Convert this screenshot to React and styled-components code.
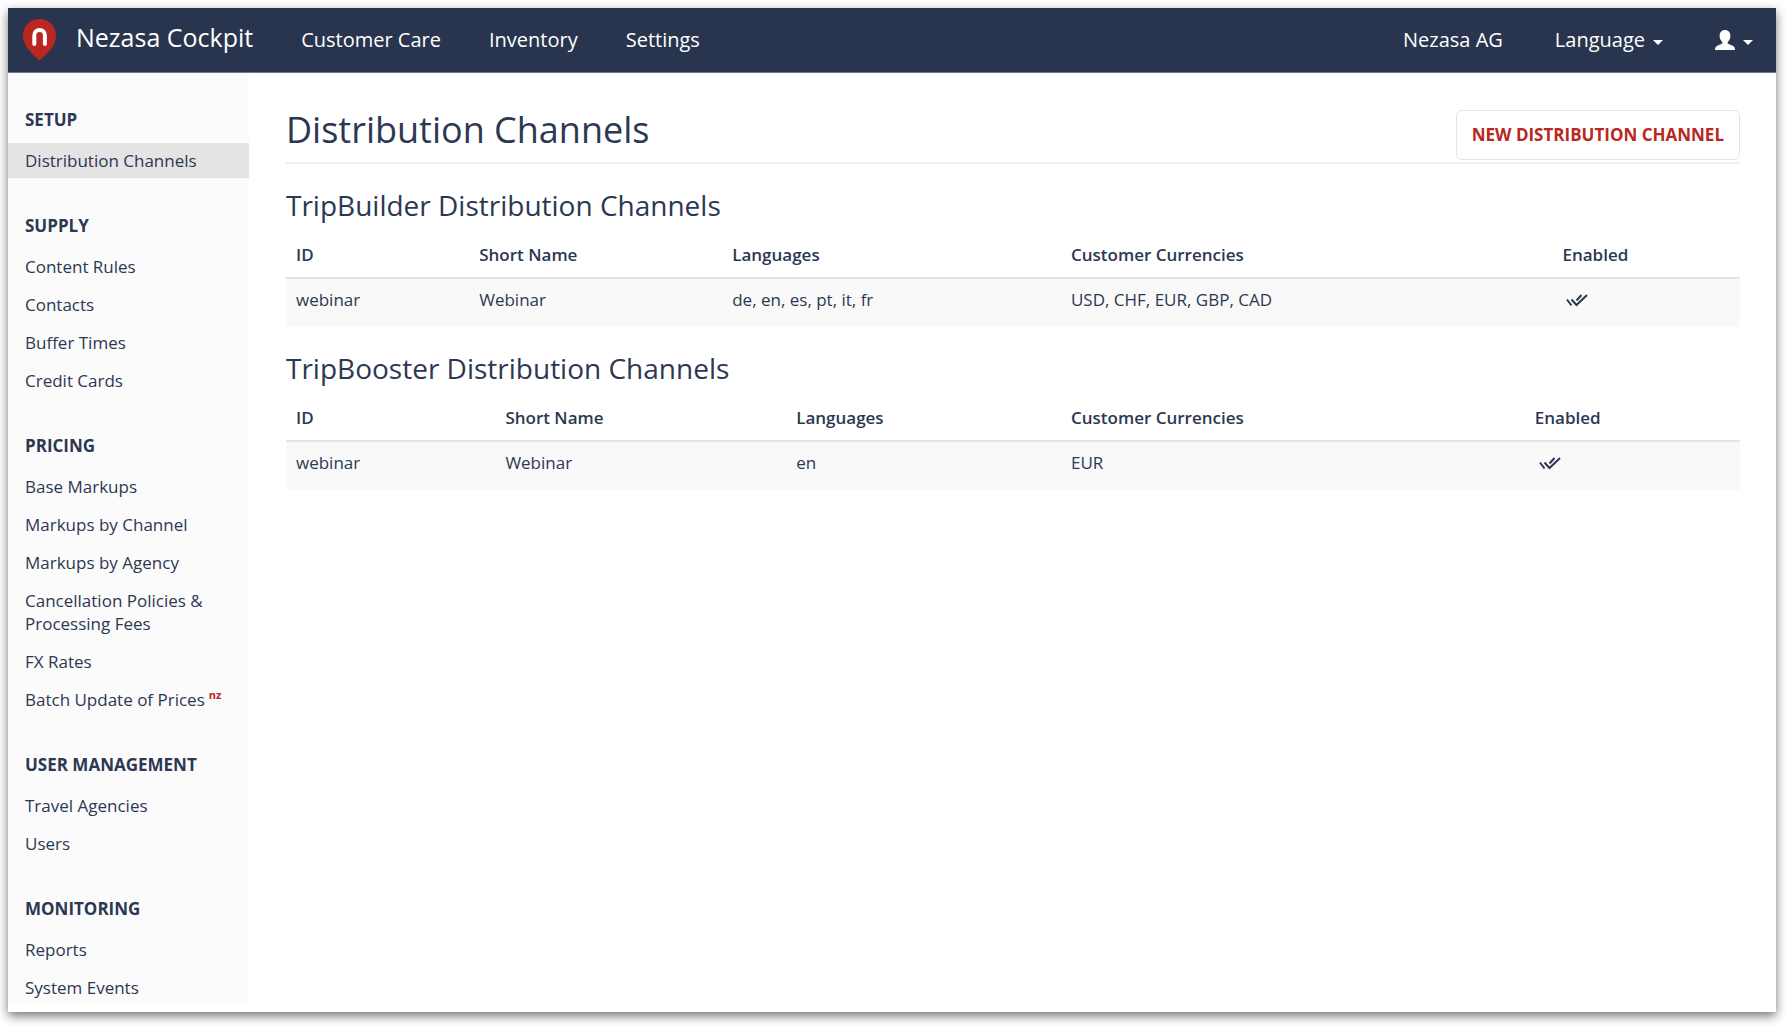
import React from "react";
import styled, { createGlobalStyle } from "styled-components";

const navy = "#29354e";
const ink = "#2c3852";
const red = "#b92720";

const GlobalStyle = createGlobalStyle`
  *, *::before, *::after { box-sizing: border-box; }
  html, body { height: 100%; margin: 0; background: #fff; }
  #root { height: 100%; }
  body, button {
    font-family: "Open Sans", "Noto Sans", sans-serif;
    font-size: 17px;
    line-height: 23px;
    color: ${ink};
  }
`;

const Stage = styled.div`
  display: flex;
  height: 100%;
  padding: 8px 10px 14px 8px;
  overflow: hidden;
`;

const Window = styled.div`
  flex: 1;
  min-width: 0;
  display: flex;
  flex-direction: column;
  background: #fff;
  box-shadow: 0 4px 10px rgba(0, 0, 0, 0.55);
`;

const Header = styled.header`
  display: flex;
  align-items: center;
  justify-content: space-between;
  height: 65px;
  flex-shrink: 0;
  padding: 0 23px 0 15px;
  background: ${navy};
  border-bottom: 1px solid #6f788a;
`;

const Brand = styled.a`
  display: flex;
  align-items: center;
  gap: 20px;
  color: #fff;
  font-size: 25px;
  line-height: 32px;
  text-decoration: none;
`;

const BrandName = styled.span`
  padding-bottom: 6px;
`;

const HeaderSide = styled.div`
  display: flex;
  align-items: center;
  gap: 48px;
`;

const Nav = styled.nav`
  display: flex;
  align-items: center;
  gap: ${(p) => p.$gap}px;
`;

const NavLink = styled.a`
  color: #fff;
  font-size: 20px;
  line-height: 26px;
  font-weight: 500;
  text-decoration: none;
`;

const NavButton = styled.button`
  display: flex;
  align-items: center;
  gap: 8px;
  padding: 0;
  border: 0;
  background: none;
  color: #fff;
  font-size: 20px;
  line-height: 26px;
  font-weight: 500;
`;

const Caret = styled.span`
  width: 0;
  height: 0;
  margin-top: 4px;
  border: 5px solid transparent;
  border-top-color: #fff;
  border-bottom: 0;
`;

const Body = styled.div`
  display: flex;
  flex: 1;
  min-height: 0;
`;

const Sidebar = styled.aside`
  display: flex;
  flex-direction: column;
  flex-shrink: 0;
  gap: 36px;
  width: 241px;
  margin-bottom: 7px;
  padding-top: 35px;
  background: #fbfbfb;
  overflow: hidden;
`;

const SideTitle = styled.h2`
  margin: 0 0 12px;
  padding: 0 17px;
  font-size: 17px;
  line-height: 23px;
  font-weight: 700;
`;

const SideList = styled.ul`
  display: flex;
  flex-direction: column;
  gap: 3px;
  margin: 0;
  padding: 0;
  list-style: none;
`;

const SideLink = styled.a`
  display: block;
  padding: 6px 17px;
  color: ${ink};
  background: ${(p) => (p.$active ? "#e4e4e4" : "transparent")};
  text-decoration: none;
`;

const Tag = styled.sup`
  margin-left: 4px;
  color: ${red};
  font-size: 11px;
  line-height: 0;
  font-weight: 700;
`;

const Main = styled.main`
  flex: 1;
  min-width: 0;
  padding: 37px 36px 0 37px;
`;

const PageHead = styled.div`
  display: flex;
  align-items: flex-start;
  justify-content: space-between;
  padding-bottom: 2px;
  border-bottom: 2px solid #eee;
`;

const PageTitle = styled.h1`
  margin: 0;
  font-size: 36px;
  line-height: 40px;
  font-weight: 400;
`;

const ActionButton = styled.button`
  height: 50px;
  padding: 0 15px 2px;
  border: 1px solid #e4e4e4;
  border-radius: 6px;
  background: #fff;
  color: ${red};
  font-weight: 700;
`;

const SectionTitle = styled.h2`
  margin: 22px 0 9px;
  font-size: 28px;
  line-height: 38px;
  font-weight: 400;
`;

const Table = styled.table`
  width: 100%;
  table-layout: fixed;
  border-collapse: collapse;
  text-align: left;
`;

const Col = styled.col`
  width: ${(p) => p.$w}%;
`;

const HeadCell = styled.th`
  padding: 10px 10px 11px;
  border-bottom: 2px solid #e4e4e4;
  font-weight: 600;
`;

const Cell = styled.td`
  padding: 9px 10px 16px;
  background: #f9f9f9;
  vertical-align: top;
`;

const Logo = () => (
  <svg width="33" height="42" viewBox="0 0 33 42" aria-hidden="true">
    <path
      d="M16.500 0C7.400 0 0 7.300 0 16.400C0 25.500 6 32 16.500 41.500C27 32 33 25.500 33 16.400C33 7.300 25.600 0 16.500 0Z"
      fill={red}
    />
    <path
      d="M11.300 25V16.200a5.300 5.300 0 0 1 10.600 0V25"
      fill="none"
      stroke="#fff"
      strokeWidth="4"
      strokeLinecap="round"
    />
  </svg>
);

const UserIcon = () => (
  <svg width="20" height="20" viewBox="0 0 20 20" aria-hidden="true">
    <path
      d="M10 0C6.800 0 4.600 2.200 4.600 5.800C4.600 8.400 5.600 10.600 7.300 12V13.600C5.500 14.800 2.400 15.600 1 16.800C.2 17.600 0 18.600 0 20H20C20 18.600 19.800 17.600 19 16.800C17.600 15.600 14.500 14.800 12.700 13.600V12C14.400 10.600 15.400 8.400 15.400 5.800C15.400 2.200 13.200 0 10 0Z"
      fill="#fff"
    />
  </svg>
);

const CheckMark = styled.svg`
  display: block;
  margin: 6px 0 0 4px;
`;

const DoubleCheck = () => (
  <CheckMark width="22" height="13" viewBox="0 0 22 13" role="img" aria-label="Enabled">
    <path
      d="M1 5.500L5.500 11.500M5.500 5.500L10.500 11L21 1M10.500 6.500L15.500 1"
      fill="none"
      stroke={ink}
      strokeWidth="2"
    />
  </CheckMark>
);

const menu = [
  { title: "SETUP", items: ["Distribution Channels"] },
  { title: "SUPPLY", items: ["Content Rules", "Contacts", "Buffer Times", "Credit Cards"] },
  {
    title: "PRICING",
    items: [
      "Base Markups",
      "Markups by Channel",
      "Markups by Agency",
      "Cancellation Policies & Processing Fees",
      "FX Rates",
      "Batch Update of Prices",
    ],
  },
  { title: "USER MANAGEMENT", items: ["Travel Agencies", "Users"] },
  { title: "MONITORING", items: ["Reports", "System Events"] },
];

const tagged = { "Batch Update of Prices": "nz" };

const columns = ["ID", "Short Name", "Languages", "Customer Currencies", "Enabled"];

const groups = [
  {
    title: "TripBuilder Distribution Channels",
    widths: [12.6, 17.4, 23.3, 33.8, 12.9],
    rows: [["webinar", "Webinar", "de, en, es, pt, it, fr", "USD, CHF, EUR, GBP, CAD"]],
  },
  {
    title: "TripBooster Distribution Channels",
    widths: [14.4, 20, 18.9, 31.9, 14.8],
    rows: [["webinar", "Webinar", "en", "EUR"]],
  },
];

function ChannelTable({ group }) {
  return (
    <section>
      <SectionTitle>{group.title}</SectionTitle>
      <Table>
        <colgroup>
          {group.widths.map((w, i) => (
            <Col key={i} $w={w} />
          ))}
        </colgroup>
        <thead>
          <tr>
            {columns.map((c) => (
              <HeadCell key={c} scope="col">{c}</HeadCell>
            ))}
          </tr>
        </thead>
        <tbody>
          {group.rows.map((row) => (
            <tr key={row[0]}>
              {row.map((value, i) => (
                <Cell key={i}>{value}</Cell>
              ))}
              <Cell>
                <DoubleCheck />
              </Cell>
            </tr>
          ))}
        </tbody>
      </Table>
    </section>
  );
}

export default function App() {
  return (
    <>
      <GlobalStyle />
      <Stage>
        <Window>
          <Header>
            <HeaderSide>
              <Brand href="#">
                <Logo />
                <BrandName>Nezasa Cockpit</BrandName>
              </Brand>
              <Nav $gap={48} aria-label="Main">
                <NavLink href="#">Customer Care</NavLink>
                <NavLink href="#">Inventory</NavLink>
                <NavLink href="#">Settings</NavLink>
              </Nav>
            </HeaderSide>
            <Nav $gap={52} aria-label="Account">
              <NavLink href="#">Nezasa AG</NavLink>
              <NavButton type="button">
                Language
                <Caret />
              </NavButton>
              <NavButton type="button" aria-label="Profile">
                <UserIcon />
                <Caret />
              </NavButton>
            </Nav>
          </Header>
          <Body>
            <Sidebar>
              {menu.map((group) => (
                <nav key={group.title} aria-label={group.title}>
                  <SideTitle>{group.title}</SideTitle>
                  <SideList>
                    {group.items.map((item) => (
                      <li key={item}>
                        <SideLink href="#" $active={item === "Distribution Channels"}>
                          {item}
                          {tagged[item] && <Tag>{tagged[item]}</Tag>}
                        </SideLink>
                      </li>
                    ))}
                  </SideList>
                </nav>
              ))}
            </Sidebar>
            <Main>
              <PageHead>
                <PageTitle>Distribution Channels</PageTitle>
                <ActionButton type="button">NEW DISTRIBUTION CHANNEL</ActionButton>
              </PageHead>
              {groups.map((group) => (
                <ChannelTable key={group.title} group={group} />
              ))}
            </Main>
          </Body>
        </Window>
      </Stage>
    </>
  );
}
